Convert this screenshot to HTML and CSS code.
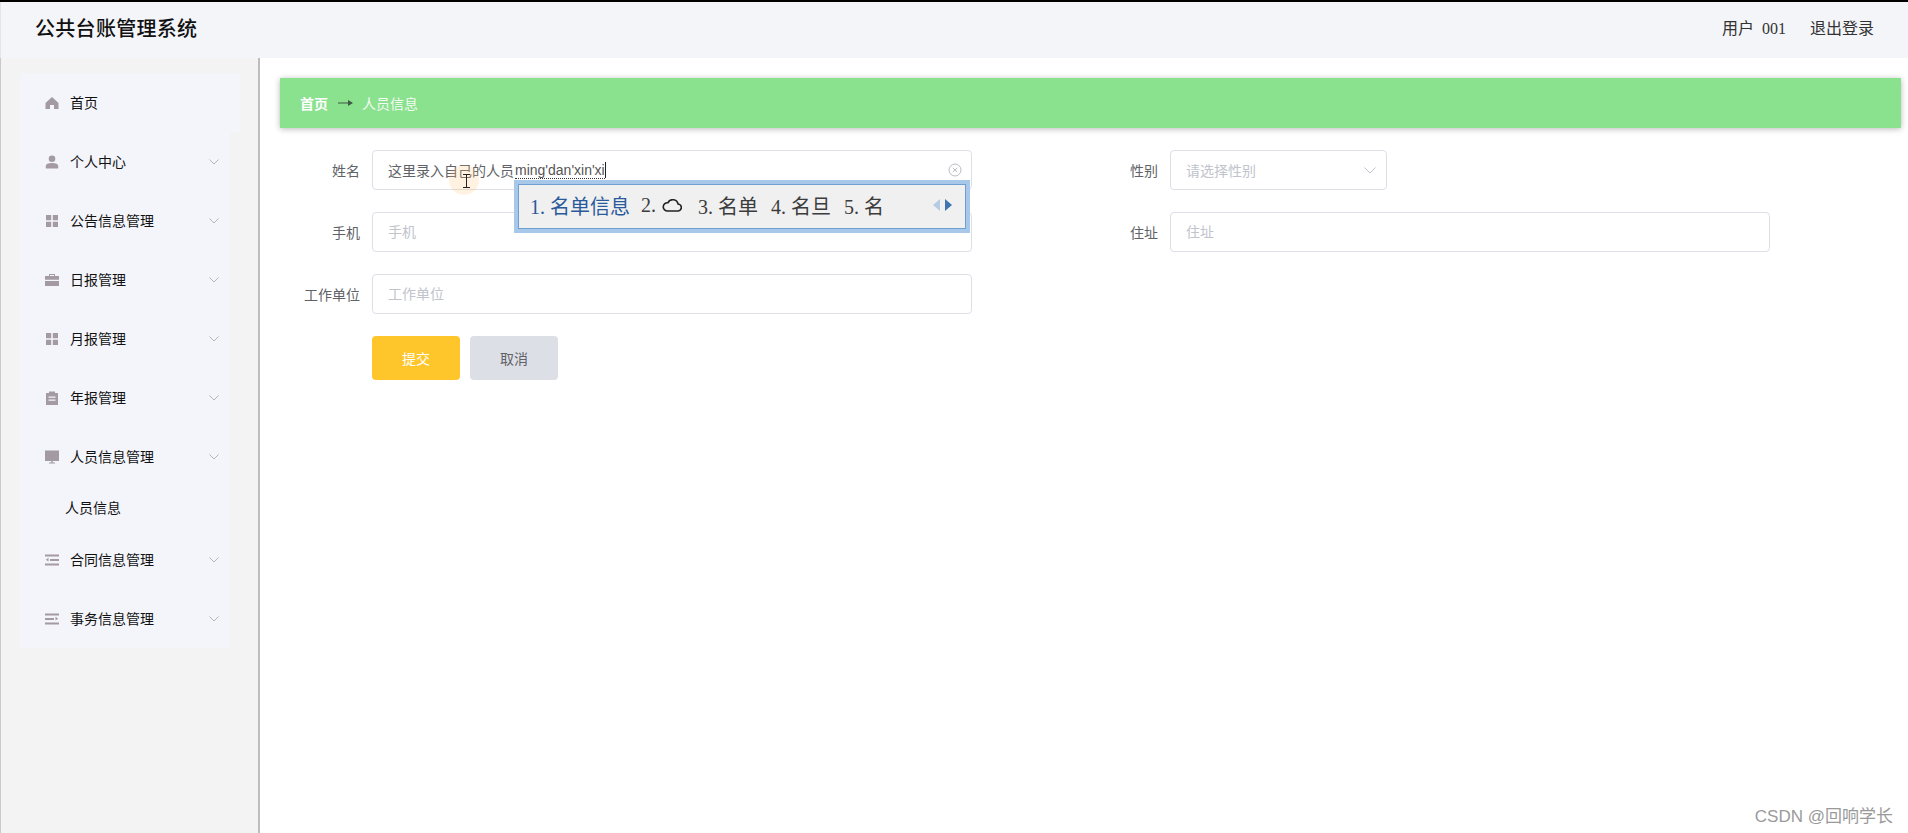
FILE: index.html
```html
<!DOCTYPE html>
<html lang="zh">
<head>
<meta charset="utf-8">
<title>公共台账管理系统</title>
<link rel="stylesheet" href="styles.css">
</head>
<body>
<div class="app">
  <header class="topbar">
    <h1 class="title">公共台账管理系统</h1>
    <div class="user">
      <span class="user-name">用户<span class="user-id">001</span></span>
      <span>退出登录</span>
    </div>
  </header>
  <div class="main">
    <aside class="sidebar">
      <nav class="menu">
        <a class="item item-home">
          <svg class="ico" viewBox="0 0 14 14"><path d="M7 1 13.5 7V13H9V9H5V13H.5V7Z"/></svg>
          <span>首页</span>
        </a>
        <a class="item">
          <svg class="ico" viewBox="0 0 14 14"><circle cx="7" cy="3.800" r="3.300"/><path d="M.8 13.500V11C.8 9 3 8 7 8s6.200 1 6.200 3v2.500Z"/></svg>
          <span>个人中心</span>
          <svg class="chev" viewBox="0 0 10 6"><path d="M.5.5 5 5 9.500.5"/></svg>
        </a>
        <a class="item">
          <svg class="ico" viewBox="0 0 14 14"><path d="M1 1h5.200v5.200H1zM7.800 1H13v5.200H7.800zM1 7.800h5.200V13H1zM7.800 7.800H13V13H7.800z"/></svg>
          <span>公告信息管理</span>
          <svg class="chev" viewBox="0 0 10 6"><path d="M.5.5 5 5 9.500.5"/></svg>
        </a>
        <a class="item">
          <svg class="ico" viewBox="0 0 14 14"><path d="M4 3V1h6v2h4v3.800H0V3ZM5 3h4V2H5ZM0 8h14v5H0Z"/></svg>
          <span>日报管理</span>
          <svg class="chev" viewBox="0 0 10 6"><path d="M.5.5 5 5 9.500.5"/></svg>
        </a>
        <a class="item">
          <svg class="ico" viewBox="0 0 14 14"><path d="M1 1h5.200v5.200H1zM7.800 1H13v5.200H7.800zM1 7.800h5.200V13H1zM7.800 7.800H13V13H7.800z"/></svg>
          <span>月报管理</span>
          <svg class="chev" viewBox="0 0 10 6"><path d="M.5.5 5 5 9.500.5"/></svg>
        </a>
        <a class="item">
          <svg class="ico" viewBox="0 0 14 14"><path fill-rule="evenodd" d="M1 2h3V.5h6V2h3v12H1ZM3.500 5.500v1.200h7V5.500Zm0 3v1.200h7V8.500Z"/></svg>
          <span>年报管理</span>
          <svg class="chev" viewBox="0 0 10 6"><path d="M.5.5 5 5 9.500.5"/></svg>
        </a>
        <a class="item">
          <svg class="ico" viewBox="0 0 14 14"><path d="M0 .5h14v10.500H0ZM6.300 11h1.400v1.500H10v1H4v-1h2.300Z"/></svg>
          <span>人员信息管理</span>
          <svg class="chev" viewBox="0 0 10 6"><path d="M.5.5 5 5 9.500.5"/></svg>
        </a>
        <a class="sub-item"><span>人员信息</span></a>
        <a class="item">
          <svg class="ico" viewBox="0 0 14 14"><path d="M0 1.500h14v2H0ZM5 6h9v2H5ZM0 10.500h14v2H0ZM3.500 4.800v3.800L.8 6.700Z"/></svg>
          <span>合同信息管理</span>
          <svg class="chev" viewBox="0 0 10 6"><path d="M.5.5 5 5 9.500.5"/></svg>
        </a>
        <a class="item">
          <svg class="ico" viewBox="0 0 14 14"><path d="M0 1.500h14v2H0ZM0 6h9v2H0ZM0 10.500h14v2H0ZM10.500 4.800v3.800l2.700-1.900Z"/></svg>
          <span>事务信息管理</span>
          <svg class="chev" viewBox="0 0 10 6"><path d="M.5.5 5 5 9.500.5"/></svg>
        </a>
      </nav>
    </aside>
    <main class="content">
      <div class="crumb">
        <strong>首页</strong>
        <svg class="crumb-arrow" viewBox="0 0 15 8"><path d="M0 3.600h10V1l5 3-5 3V4.400H0Z"/></svg>
        <span>人员信息</span>
      </div>
      <form class="form">
        <label class="label">姓名</label>
        <div class="field">
          <div class="box box-active">
            <span>这里录入自己的人员</span><span class="compose">ming'dan'xin'xi</span><span class="caret"></span>
            <svg class="clear" viewBox="0 0 14 14"><circle cx="7" cy="7" r="6"/><path d="M4.800 4.800l4.400 4.400M9.200 4.800 4.800 9.200"/></svg>
          </div>
          <div class="pointer-glow"></div>
          <svg class="ibeam" viewBox="0 0 9 14"><path d="M1 .5h7M4.500.5v13M1 13.500h7"/></svg>
          <div class="ime">
            <span class="cand cand-on">1. 名单信息</span>
            <span class="cand cand-2">2.
              <svg class="cloud" viewBox="0 0 20 13"><path d="M5 12h10.500a3.500 3.500 0 0 0 .6-7A5.500 5.500 0 0 0 5.800 3.800 4 4 0 0 0 5 12Z"/></svg>
            </span>
            <span class="cand">3. 名单</span>
            <span class="cand">4. 名旦</span>
            <span class="cand">5. 名</span>
            <span class="pager">
              <svg class="pg pg-off" viewBox="0 0 7 12"><path d="M7 0v12L0 6Z"/></svg>
              <svg class="pg" viewBox="0 0 7 12"><path d="M0 0v12l7-6Z"/></svg>
            </span>
          </div>
        </div>
        <label class="label">性别</label>
        <div class="box box-select">
          <span class="placeholder">请选择性别</span>
          <svg class="select-chev" viewBox="0 0 12 7"><path d="M.5.5 6 6 11.500.5"/></svg>
        </div>

        <label class="label">手机</label>
        <input class="box input" placeholder="手机">
        <label class="label">住址</label>
        <input class="box input" placeholder="住址">

        <label class="label">工作单位</label>
        <input class="box input" placeholder="工作单位">
        <span class="spacer"></span>

        <div class="actions">
          <button class="btn btn-submit" type="button">提交</button>
          <button class="btn btn-cancel" type="button">取消</button>
        </div>
      </form>
    </main>
  </div>
  <div class="watermark">CSDN @回响学长</div>
</div>
</body>
</html>
```
FILE: styles.css
```css
* { box-sizing: border-box; }
html, body { margin: 0; height: 100%; overflow: hidden; background: #fff; }
body {
  font-family: "Liberation Sans", "Noto Sans CJK SC", sans-serif;
  font-size: 14px;
  color: #606266;
}
.app {
  position: relative;
  display: flex;
  flex-direction: column;
  height: 100%;
  border-top: 2px solid #000;
}
.topbar {
  display: flex;
  align-items: center;
  justify-content: space-between;
  height: 56px;
  flex: none;
  padding: 0 34px 2px 36px;
  background: #f4f5f9;
  border-left: 1px solid #e4e4e4;
}
.title {
  margin: 0 0 0 -2px;
  font-size: 20px;
  font-weight: 500;
  letter-spacing: .3px;
  line-height: 1;
  color: #111;
}
.user {
  display: flex;
  gap: 24px;
  font-size: 16px;
  line-height: 1;
  color: #333;
}
.user-id {
  margin-left: 8px;
  font-family: "Liberation Serif", serif;
  font-size: 16px;
}
.main { display: flex; flex: 1; min-height: 0; }
.sidebar {
  flex: none;
  width: 260px;
  padding: 15px 0 0 20px;
  background: #f3f3f3;
  border-left: 1px solid #c9c9c9;
  border-right: 2px solid #bdbdbd;
}
.menu {
  width: 210px;
  margin-left: -1px;
  background: #f4f5fb;
}
.item {
  display: flex;
  align-items: center;
  height: 59px;
  padding: 0 11px 0 25px;
  color: #111;
  font-size: 14px;
}
.item span, .sub-item span { margin-bottom: 2px; }
.item-home { width: 220px; background: #f4f5fb; }
.ico { width: 14px; height: 14px; margin: 1px 11px 0 0; fill: #a39aa3; flex: none; }
.chev {
  width: 10px;
  height: 6px;
  margin-left: auto;
  fill: none;
  stroke: #b5b5bb;
  stroke-width: 1;
}
.sub-item {
  display: flex;
  align-items: center;
  height: 44px;
  padding-left: 45px;
  color: #111;
}
.content { flex: 1; min-width: 0; padding: 20px 6px 0 20px; }
.crumb {
  display: flex;
  align-items: center;
  height: 50px;
  margin-right: 1px;
  padding-left: 20px;
  background: #8ae18e;
  color: #f3fbf3;
  box-shadow: 0 1px 6px rgba(0, 0, 0, .28);
}
.crumb strong { color: #fff; }
.crumb span { margin-bottom: 1px; }
.crumb-arrow { width: 15px; height: 8px; margin: 0 9px 0 10px; fill: #3f5a45; }
.form {
  display: grid;
  grid-template-columns: 80px 600px 174px 600px;
  grid-auto-rows: 40px;
  column-gap: 12px;
  row-gap: 22px;
  margin-top: 22px;
}
.label { align-self: center; text-align: right; color: #606266; }
.field { position: relative; }
.box {
  display: flex;
  align-items: center;
  width: 100%;
  height: 40px;
  padding: 0 15px;
  border: 1px solid #dcdfe6;
  border-radius: 4px;
  background: #fff;
  font: inherit;
  color: #606266;
}
.input { outline: none; }
.input::placeholder { color: #c0c4cc; opacity: 1; }
.placeholder { color: #c0c4cc; }
.box-select { width: 217px; justify-content: space-between; padding-right: 10px; }
.select-chev { width: 12px; height: 7px; fill: none; stroke: #c0c4cc; stroke-width: 1; }
.compose { margin-left: 1px; border-bottom: 1px dotted #333; line-height: 16px; color: #555; }
.caret { width: 1px; height: 16px; background: #222; }
.clear {
  width: 14px;
  height: 14px;
  margin-left: auto;
  margin-right: -6px;
  fill: none;
  stroke: #b9bcc4;
  stroke-width: 1;
}
.pointer-glow {
  position: absolute;
  left: 77px;
  top: 15px;
  width: 30px;
  height: 30px;
  border-radius: 50%;
  background: rgba(255, 196, 120, .22);
}
.ibeam {
  position: absolute;
  left: 90px;
  top: 24px;
  width: 9px;
  height: 14px;
  fill: none;
  stroke: #222;
  stroke-width: 1;
}
.ime {
  position: absolute;
  left: 142px;
  top: 30px;
  z-index: 2;
  display: flex;
  align-items: center;
  width: 456px;
  height: 53px;
  padding: 0 14px 3px 12px;
  border: 4px solid #a8c8ea;
  outline: 1px solid #6f9fd2;
  outline-offset: -5px;
  background: #f0f0f0;
  font-family: "Liberation Serif", "Noto Sans CJK SC", serif;
  font-size: 20px;
  color: #3c3c3c;
  white-space: nowrap;
}
.cand { margin-right: 13px; }
.cand-on { color: #2a5a9b; margin-right: 11px; }
.cand-2 { display: flex; align-items: center; gap: 6px; margin-right: 16px; }
.cloud { width: 20px; height: 13px; fill: none; stroke: #222; stroke-width: 1.6; }
.pager { display: flex; gap: 5px; margin-left: auto; }
.pg { width: 7px; height: 14px; fill: #3f74b0; }
.pg-off { fill: #b5cde4; }
.spacer { grid-column: 3 / 5; }
.actions { grid-column: 2 / 5; display: flex; gap: 10px; height: 44px; }
.btn {
  width: 88px;
  height: 44px;
  border: 0;
  border-radius: 4px;
  font: inherit;
}
.btn-submit { background: #ffc62b; color: #fff; }
.btn-cancel { background: #dcdfe6; color: #606266; }
.watermark {
  position: absolute;
  right: 15px;
  bottom: 6px;
  font-size: 17px;
  color: #9a9a9a;
}
```
